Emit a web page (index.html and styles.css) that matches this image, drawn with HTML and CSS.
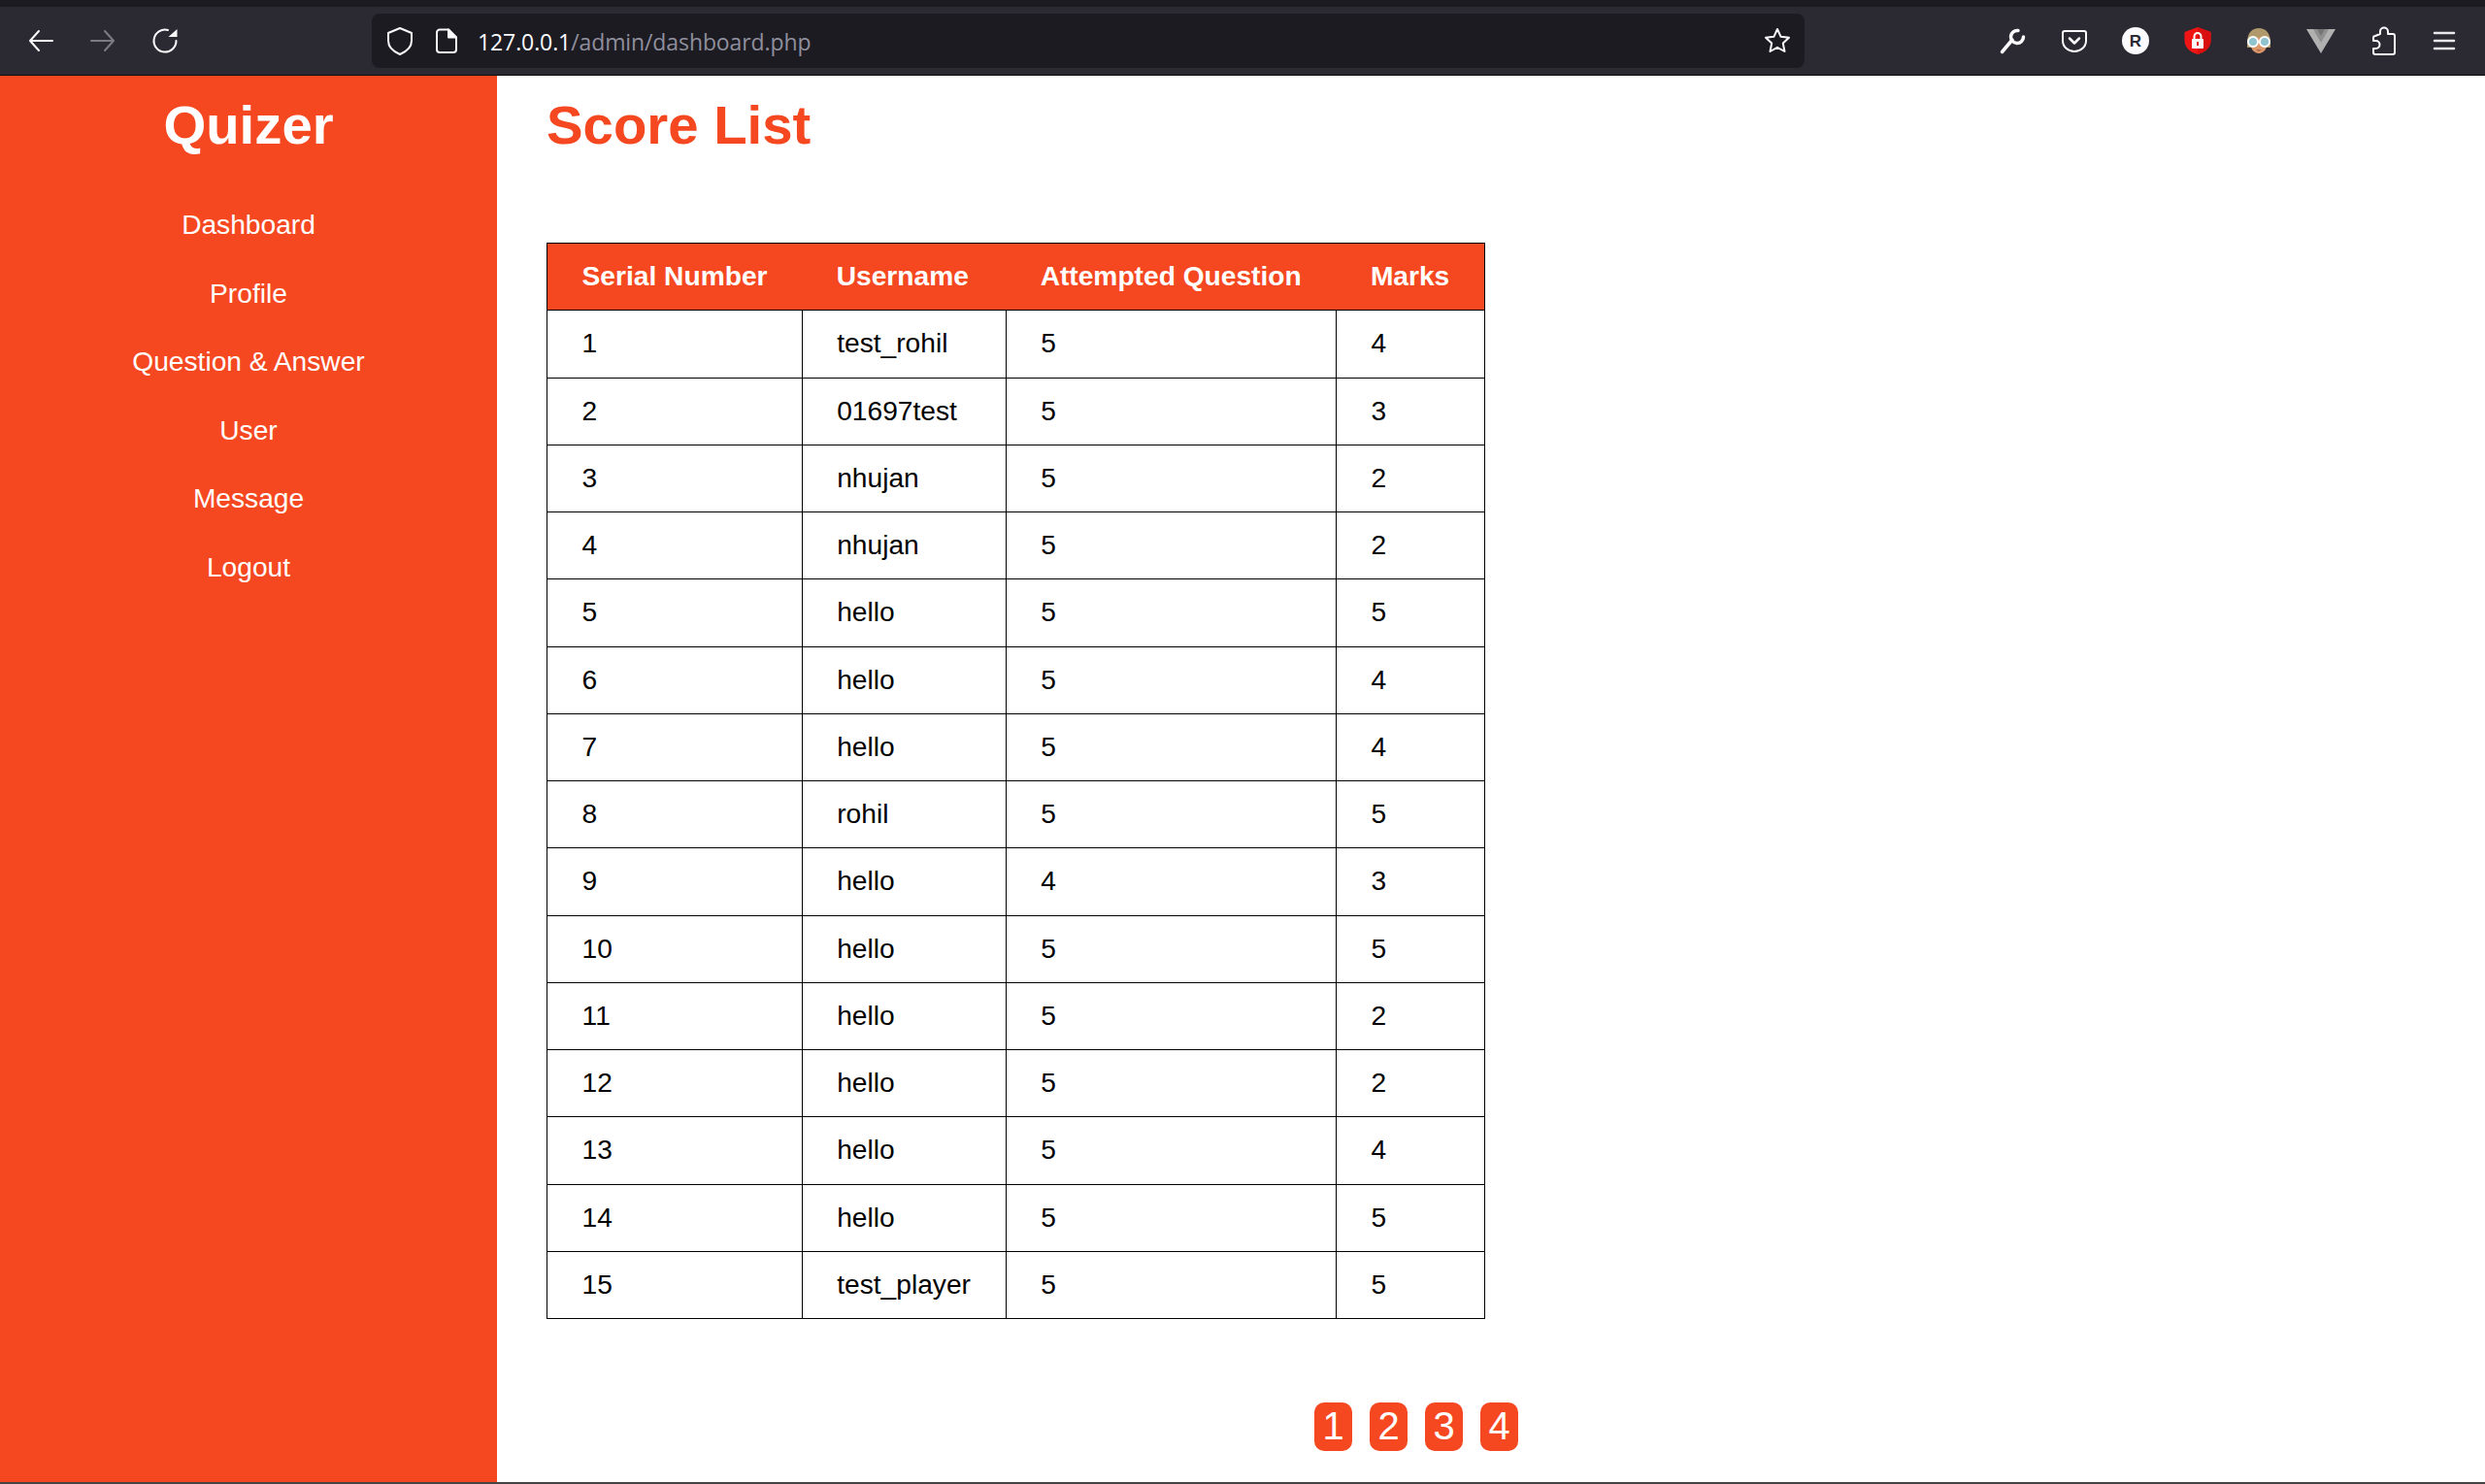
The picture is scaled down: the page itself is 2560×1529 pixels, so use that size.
FILE: index.html

```html
<!DOCTYPE html>
<html lang="en">
<head>
    <meta charset="UTF-8">
    <title>Score List</title>
    <link rel="stylesheet" href="styles.css">
</head>
<body>
<div class="tabstrip"></div>
<div class="toolbar">
    <div class="nav-icons">
        <span class="tool"><svg width="28" height="28" viewBox="0 0 28 28" fill="none" stroke="#fbfbfe" stroke-width="2" stroke-linecap="round" stroke-linejoin="round"><path d="M26 14H3M12 4 3 14l9 10"/></svg></span>
        <span class="tool"><svg width="28" height="28" viewBox="0 0 28 28" fill="none" stroke="#7c7b81" stroke-width="2" stroke-linecap="round" stroke-linejoin="round"><path d="M2 14h23M16 4l9 10-9 10"/></svg></span>
        <span class="tool"><svg width="28" height="28" viewBox="0 0 28 28" fill="none" stroke="#fbfbfe" stroke-width="2" stroke-linecap="round"><path d="M17 3A11.5 11.5 0 1 0 25.500 14"/><path d="M17.500 10 26.500 2v8z" fill="#fbfbfe" stroke="none"/></svg></span>
    </div>
    <div class="urlbar">
        <svg class="url-shield" width="28" height="30" viewBox="0 0 28 30" fill="none" stroke="#fbfbfe" stroke-width="2" stroke-linejoin="round"><path d="M14 2 26 7v8c0 6-5 11-12 14C7 26 2 21 2 15V7z"/></svg>
        <svg class="url-file" width="24" height="26" viewBox="0 0 24 26" fill="none" stroke="#fbfbfe" stroke-width="2" stroke-linejoin="round"><path d="M5 1.500h9l8 8V22a3 3 0 0 1-3 3H5a3 3 0 0 1-3-3V4.500a3 3 0 0 1 3-3z"/><path d="M14 1.500l8 8h-8z" fill="#fbfbfe"/></svg>
        <span class="url-text"><span class="url-host">127.0.0.1</span>/admin/dashboard.php</span>
        <svg class="url-star" width="28" height="28" viewBox="0 0 28 28" fill="none" stroke="#fbfbfe" stroke-width="2" stroke-linejoin="round"><path d="M14 2l3.600 7.800 8.400 1-6.200 5.800 1.700 8.400-7.500-4.200L6.500 25l1.700-8.400L2 10.800l8.400-1z"/></svg>
    </div>
    <div class="ext-icons">
        <span class="ext"><svg width="28" height="28" viewBox="0 0 28 28" fill="none" stroke="#fbfbfe" stroke-linecap="round"><path d="M3.500 25.500 14 13" stroke-width="3.500"/><path d="M20 3.500A6.500 6.500 0 1 0 25.500 10" stroke-width="3.500"/></svg></span>
        <span class="ext"><svg width="28" height="28" viewBox="0 0 28 28" fill="none" stroke="#fbfbfe" stroke-width="2" stroke-linecap="round" stroke-linejoin="round"><path d="M4 4h20a2 2 0 0 1 2 2v8a12 11 0 0 1-24 0V6a2 2 0 0 1 2-2z"/><path d="M9 11.500l5 5 5-5" stroke-width="2.500"/></svg></span>
        <span class="ext"><svg width="28" height="28" viewBox="0 0 28 28"><circle cx="14" cy="14" r="14" fill="#fbfbfe"/><text x="14" y="20" class="ext-letter" text-anchor="middle">R</text></svg></span>
        <span class="ext"><svg width="28" height="28" viewBox="0 0 28 28"><path d="M14 0l13.500 5v9c0 7-6 12-13.500 14C6.500 26 .5 21 .5 14V5z" fill="#f01414"/><path d="M14 0l13.500 5v9c0 7-6 12-13.500 14z" fill="#d90e0e"/><rect x="8" y="12" width="12" height="10" rx="1" fill="#fbfbfe"/><path d="M10.500 12V9.500a3.500 3.500 0 0 1 7 0V12" fill="none" stroke="#fbfbfe" stroke-width="2"/><rect x="13" y="15" width="2" height="4" fill="#e01010"/></svg></span>
        <span class="ext"><svg width="28" height="28" viewBox="0 0 28 28"><path d="M2 16C2 6 7 1 14 1s12 5 12 15v5H2z" fill="#b09a6c"/><path d="M5 15c3 0 6-2 9-5 3 3 6 5 9 5 0 7-4 12-9 12S5 22 5 15z" fill="#d9976a"/><circle cx="8" cy="15" r="5" fill="#8fc4cf" stroke="#fff" stroke-width="2"/><circle cx="20" cy="15" r="5" fill="#8fc4cf" stroke="#fff" stroke-width="2"/><path d="M11 23h6l-3 2z" fill="#b5664a"/></svg></span>
        <span class="ext"><svg width="30" height="26" viewBox="0 0 30 26"><path d="M0 1h30L15 26z" fill="#b0b0b0"/><path d="M7 1h16l-8 14z" fill="#8f8f8f"/><path d="M11 1h8l-4 7z" fill="#757575"/></svg></span>
        <span class="ext"><svg width="28" height="30" viewBox="0 0 28 30" fill="none" stroke="#fbfbfe" stroke-width="2" stroke-linejoin="round"><path d="M11 8V5.500a4 4 0 0 1 8 0V8h5a2 2 0 0 1 2 2v17a2 2 0 0 1-2 2H6a2 2 0 0 1-2-2v-4h2.500a4 4 0 0 0 0-8H4v-3a2 2 0 0 1 2-2z"/></svg></span>
        <span class="ext"><svg width="24" height="20" viewBox="0 0 24 20" stroke="#e8e8ea" stroke-width="2.500" stroke-linecap="round"><path d="M2 2h20M2 10h20M2 18h20"/></svg></span>
    </div>
</div>
<div class="page">
    <div class="sidebar">
        <h1 class="brand">Quizer</h1>
        <a href="#" class="side-link">Dashboard</a>
        <a href="#" class="side-link">Profile</a>
        <a href="#" class="side-link">Question &amp; Answer</a>
        <a href="#" class="side-link">User</a>
        <a href="#" class="side-link">Message</a>
        <a href="#" class="side-link">Logout</a>
    </div>
    <div class="content">
        <h1 class="page-title">Score List</h1>
        <table class="score-table">
            <thead>
                <tr><th>Serial Number</th><th>Username</th><th>Attempted Question</th><th>Marks</th></tr>
            </thead>
            <tbody>
                <tr><td>1</td><td>test_rohil</td><td>5</td><td>4</td></tr>
                <tr><td>2</td><td>01697test</td><td>5</td><td>3</td></tr>
                <tr><td>3</td><td>nhujan</td><td>5</td><td>2</td></tr>
                <tr><td>4</td><td>nhujan</td><td>5</td><td>2</td></tr>
                <tr><td>5</td><td>hello</td><td>5</td><td>5</td></tr>
                <tr><td>6</td><td>hello</td><td>5</td><td>4</td></tr>
                <tr><td>7</td><td>hello</td><td>5</td><td>4</td></tr>
                <tr><td>8</td><td>rohil</td><td>5</td><td>5</td></tr>
                <tr><td>9</td><td>hello</td><td>4</td><td>3</td></tr>
                <tr><td>10</td><td>hello</td><td>5</td><td>5</td></tr>
                <tr><td>11</td><td>hello</td><td>5</td><td>2</td></tr>
                <tr><td>12</td><td>hello</td><td>5</td><td>2</td></tr>
                <tr><td>13</td><td>hello</td><td>5</td><td>4</td></tr>
                <tr><td>14</td><td>hello</td><td>5</td><td>5</td></tr>
                <tr><td>15</td><td>test_player</td><td>5</td><td>5</td></tr>
            </tbody>
        </table>
        <div class="pagination">
            <a href="#" class="page-num">1</a>
            <a href="#" class="page-num">2</a>
            <a href="#" class="page-num">3</a>
            <a href="#" class="page-num">4</a>
        </div>
    </div>
</div>
<div class="bottom-line"></div>
</body>
</html>
```

FILE: styles.css

```css
* {
    box-sizing: border-box;
}

body {
    margin: 0;
    height: 100vh;
    display: flex;
    flex-direction: column;
    overflow: hidden;
    font-family: "Liberation Sans", Arial, sans-serif;
    background-color: #ffffff;
    color: #000000;
}

/* browser chrome */
.tabstrip {
    height: 7px;
    background-color: #1c1b22;
}

.toolbar {
    height: 71px;
    flex-shrink: 0;
    display: flex;
    align-items: center;
    padding: 0 10px 1px;
    background-color: #2b2a33;
    border-bottom: 1px solid #0c0c0d;
}

.nav-icons {
    display: flex;
    width: 373px;
}

.tool {
    width: 64px;
    display: flex;
    justify-content: center;
}

.urlbar {
    width: 1476px;
    height: 56px;
    display: flex;
    align-items: center;
    padding: 0 14px;
    border-radius: 8px;
    background-color: #1c1b22;
}

.url-shield {
    margin-left: 1px;
}

.url-file {
    margin-left: 22px;
}

.url-text {
    margin-left: 20px;
    padding-top: 2px;
    flex: 1;
    font-family: "Open Sans", sans-serif;
    font-size: 23px;
    letter-spacing: -0.1px;
    color: #8f8f9d;
}

.url-host {
    color: #fbfbfe;
}

.ext-icons {
    display: flex;
    margin-left: auto;
}

.ext {
    width: 63.6px;
    display: flex;
    align-items: center;
    justify-content: center;
}

.ext-letter {
    font-family: "Liberation Sans", sans-serif;
    font-size: 17px;
    font-weight: bold;
    fill: #2b2a33;
}

/* page */
.page {
    flex: 1;
    display: flex;
    min-height: 0;
}

.sidebar {
    width: 512px;
    flex-shrink: 0;
    padding-top: 18px;
    display: flex;
    flex-direction: column;
    align-items: center;
    background-color: #f64820;
    color: #ffffff;
}

.brand {
    margin: 0 0 36px;
    font-size: 56.32px;
}

.side-link {
    height: 70.5px;
    display: flex;
    align-items: center;
    font-size: 28.16px;
    color: #ffffff;
    text-decoration: none;
}

.content {
    flex: 1;
    padding: 18px 0 0 51px;
}

.page-title {
    margin: 0 0 89px;
    font-size: 56.32px;
    color: #f64820;
}

.score-table {
    border-collapse: collapse;
    font-size: 28.16px;
    border: 1px solid #000000;
}

.score-table th {
    height: 69.25px;
    padding: 0 35.6px;
    text-align: left;
    color: #ffffff;
    background-color: #f64820;
}

.score-table td {
    height: 69.25px;
    padding: 0 35.6px;
    border: 1px solid #000000;
}

.pagination {
    display: flex;
    gap: 18px;
    margin: 86px 0 0 791px;
}

.page-num {
    width: 39px;
    height: 50px;
    display: flex;
    align-items: center;
    justify-content: center;
    padding-bottom: 2px;
    border-radius: 10px;
    font-size: 40px;
    color: #ffffff;
    text-decoration: none;
    background-color: #f64820;
}

.bottom-line {
    height: 2px;
    flex-shrink: 0;
    background-color: #444444;
}
```
